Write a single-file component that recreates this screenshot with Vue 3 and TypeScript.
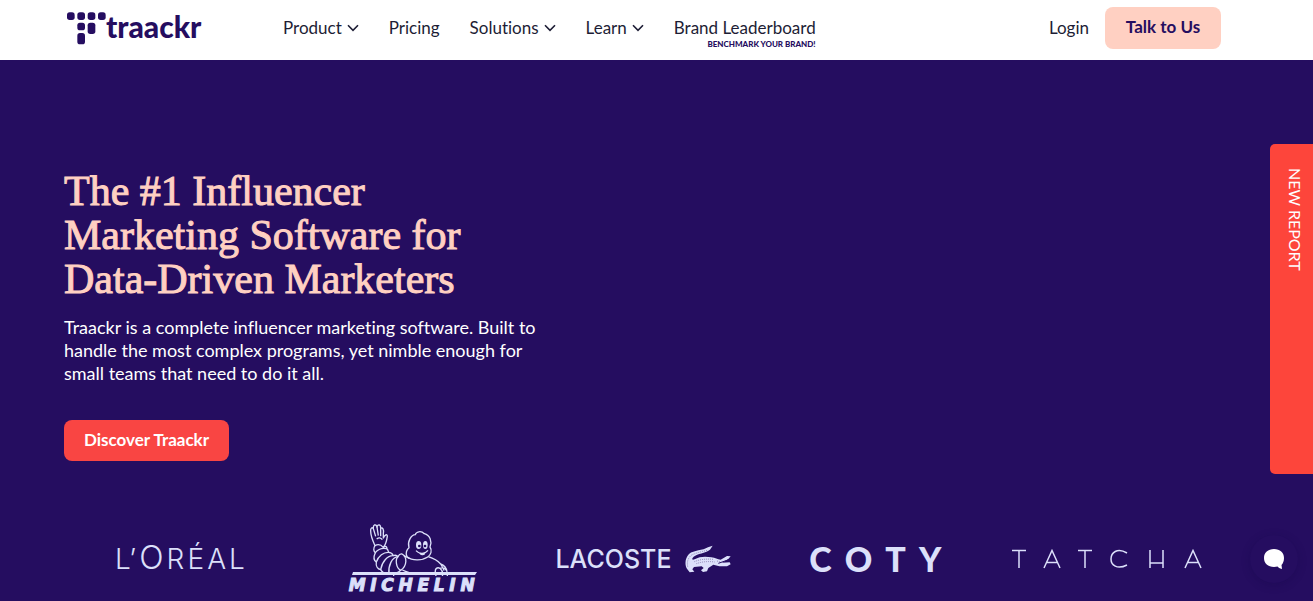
<script setup lang="ts">
interface NavItem {
  label: string
  menu?: boolean
  note?: string
}

const navItems: NavItem[] = [
  { label: 'Product', menu: true },
  { label: 'Pricing' },
  { label: 'Solutions', menu: true },
  { label: 'Learn', menu: true },
  { label: 'Brand Leaderboard', note: 'Benchmark your brand!' },
]
</script>

<template>
  <div class="page">
    <header class="header">
      <a class="brand" href="#" aria-label="traackr home">
        <svg class="brand-mark" viewBox="0 0 117 97" aria-hidden="true">
          <rect x="0" y="0" width="23" height="23" rx="8" />
          <rect x="31" y="0" width="23" height="23" rx="8" />
          <rect x="62" y="0" width="23" height="23" rx="8" />
          <rect x="93" y="0" width="23" height="23" rx="8" />
          <rect x="31" y="31" width="23" height="23" rx="8" />
          <rect x="62" y="31" width="23" height="34" rx="8" />
          <rect x="31" y="62" width="23" height="34" rx="8" />
        </svg>
        <span class="brand-name">traackr</span>
      </a>
      <nav class="nav" aria-label="Main">
        <template v-for="item in navItems" :key="item.label">
          <button v-if="item.menu" type="button" class="nav-item">
            {{ item.label }}
            <svg class="chevron" viewBox="0 0 12 8" aria-hidden="true">
              <path d="M1 1.2 L6 6.4 L11 1.2" />
            </svg>
          </button>
          <a v-else href="#" class="nav-item">
            {{ item.label }}
            <span v-if="item.note" class="nav-note">{{ item.note }}</span>
          </a>
        </template>
      </nav>
      <div class="account">
        <a href="#" class="nav-item">Login</a>
        <a href="#" class="talk">Talk to Us</a>
      </div>
    </header>

    <main class="hero">
      <section class="intro">
        <h1>The #1 Influencer<br />Marketing Software for<br />Data-Driven Marketers</h1>
        <p>
          Traackr is a complete influencer marketing software. Built to<br />
          handle the most complex programs, yet nimble enough for<br />
          small teams that need to do it all.
        </p>
        <a href="#" class="discover">Discover Traackr</a>
      </section>

      <ul class="clients">
        <li class="wordmark loreal" aria-label="L’ORÉAL">
          <span>L’</span><span class="loreal-o">O</span><span>R</span><span>É</span><span>A</span><span>L</span>
        </li>
        <li class="michelin">
          <svg class="michelin-man" viewBox="0 0 390 162" aria-hidden="true">
            <g class="outline">
              <path d="M84 71 C77 56 71 40 71 27 C70 18 76 14 79 20 C78 8 86 4 90 15 C93 5 101 7 101 19 C107 15 111 22 109 34 L109 48 C113 39 121 34 121 43 C119 57 116 68 109 76" />
              <path d="M79 20 L86 43 M90 15 L94 41 M101 19 L101 43 M89 51 Q99 43 106 53" />
              <path d="M84 71 C78 79 80 88 85 92 C93 82 105 77 119 80 C121 75 116 70 109 76 C101 67 91 67 84 71" />
              <path d="M85 92 C78 107 82 116 88 120 C94 102 110 90 125 91 C123 84 121 81 119 80" />
              <path d="M88 120 C86 132 92 141 101 143 C105 119 122 100 139 101 C136 94 131 91 125 91" />
              <path d="M101 143 C105 151 116 156 126 155 C123 132 135 105 153 104 C149 99 144 99 139 101" />
              <path d="M126 155 C140 158 153 153 161 145 C147 138 144 112 153 104 M161 145 C181 132 181 104 165 96 C159 95 156 98 153 104" />
              <path d="M180 104 C174 94 180 82 186 77 C180 59 193 38 205 38 C207 29 222 25 232 35 C249 39 256 59 249 75 C257 86 251 99 242 105 C224 117 195 116 180 104Z" />
              <path d="M171 101 L187 109 M166 144 C191 157 235 158 266 151 M140 157 L140 163" />
              <path d="M244 104 C260 109 274 118 281 126 C285 133 289 139 291 146 M279 139 C289 135 297 140 301 151 L301 163 M267 163 L265 149 C264 141 270 134 279 139 C286 145 288 154 286 163 M281 126 C292 130 298 138 300 149" />
              <path d="M207 86 C218 98 233 97 243 85 M218 93 Q228 104 235 91" />
            </g>
            <ellipse cx="215" cy="69" rx="8" ry="12" />
            <ellipse cx="235" cy="69" rx="7" ry="12" />
            <circle class="pupil" cx="217" cy="72" r="4" />
            <circle class="pupil" cx="234" cy="72" r="4" />
          </svg>
          <svg class="michelin-bar" viewBox="0 0 130 4" aria-hidden="true">
            <path d="M6 0 H130 L128 3 H5Z" />
          </svg>
          <span class="wordmark michelin-name" aria-label="MICHELIN">
            <b v-for="(letter, index) in 'MICHELIN'" :key="index">{{ letter }}</b>
          </span>
        </li>
        <li class="lacoste">
          LACOSTE
          <svg class="crocodile" viewBox="0 0 138 84" aria-hidden="true">
            <path d="M7 73 C-2 61 0 39 12 27 C27 15 53 17 69 7 L83 2 L75 14 C60 25 38 25 26 35 C19 42 21 47 29 43 C44 34 62 34 79 37 C91 39 97 43 107 44 L126 33 L137 34 L130 42 L111 53 L134 52 L137 58 L126 64 L103 64 L85 59 L70 69 L66 79 L54 81 L48 76 L56 69 L50 64 L27 66 L22 73 L28 80 L14 82Z" />
            <path class="scale" d="M8 65 Q4 42 20 30 Q37 22 67 16 M28 50 Q53 40 84 43 M34 56 Q59 47 89 51 M96 48 L104 50" />
            <path class="mouth" d="M100 55 L134 43" />
          </svg>
        </li>
        <li class="wordmark coty" aria-label="COTY"><b>C</b><b>O</b><b>T</b><b>Y</b></li>
        <li class="tatcha">
          <svg viewBox="0 0 190 20" role="img" aria-label="TATCHA">
            <path d="M0 1.5 H14 M7 1.5 V19 M32 19 L40 1.5 L48 19 M35 13.5 H45 M66 1.5 H80 M73 1.5 V19 M115 4 C105 -2 99 4 99 10 C99 16 105 21 115 16 M138 1 V19 M151 1 V19 M138 14 H151 M173 19 L181 1.5 L189 19 M176 13.5 H186" />
          </svg>
        </li>
      </ul>
    </main>

    <a href="#" class="report">NEW REPORT</a>
    <button type="button" class="chat" aria-label="Open chat">
      <svg viewBox="0 0 20 20" aria-hidden="true">
        <path d="M10 0 C16 0 20 3.5 20 9 C20 12 19 14.4 17.5 16 L18 20 C15.5 19.6 14.5 18.5 13.5 17.6 C12.5 18 11.3 18 10 18 C4 18 0 14.5 0 9 C0 3.5 4 0 10 0Z" />
      </svg>
    </button>
  </div>
</template>

<style>
body {
  margin: 0;
}
</style>

<style scoped>
.page {
  display: flex;
  flex-direction: column;
  min-height: 100vh;
  background: #250d60;
  color: #fff;
  font-family: Lato, "Liberation Sans", sans-serif;
  font-variant-ligatures: no-common-ligatures;
}

a {
  color: inherit;
  text-decoration: none;
}

.header {
  box-sizing: border-box;
  display: flex;
  align-items: center;
  height: 60px;
  padding: 0 92px 4px 67px;
  background: #fff;
  color: #1d1d35;
}

.brand {
  display: flex;
  width: 216px;
  color: #250d60;
}

.brand-mark {
  width: 39px;
  height: 33px;
  fill: #250d60;
}

.brand-name {
  font-size: 30px;
  font-weight: 900;
  line-height: 29px;
}

.nav {
  display: flex;
  gap: 30px;
}

.nav-item {
  position: relative;
  display: flex;
  align-items: center;
  gap: 5px;
  padding: 0;
  border: 0;
  background: none;
  color: inherit;
  font: inherit;
  font-size: 17px;
  line-height: 24px;
  cursor: pointer;
}

.chevron {
  width: 12px;
  height: 8px;
  fill: none;
  stroke: currentColor;
  stroke-width: 1.6;
}

.nav-note {
  position: absolute;
  top: 22px;
  right: 0;
  color: #250d60;
  font-size: 8px;
  font-weight: 900;
  line-height: 12px;
  text-transform: uppercase;
  white-space: nowrap;
}

.account {
  display: flex;
  align-items: center;
  gap: 16px;
  margin-left: auto;
}

.talk,
.discover {
  box-sizing: border-box;
  border-radius: 8px;
  font-size: 17px;
  font-weight: 700;
  text-align: center;
}

.talk {
  width: 116px;
  height: 42px;
  background: #ffd0c2;
  color: #250d60;
  line-height: 40px;
}

.hero {
  display: flex;
  flex: 1;
  flex-direction: column;
  justify-content: space-between;
  padding: 109px 90px 6px 64px;
}

.intro {
  display: flex;
  flex-direction: column;
  align-items: flex-start;
}

h1 {
  margin: 0;
  color: #ffd0c2;
  font-family: "Liberation Serif", serif;
  font-size: 42px;
  font-weight: 400;
  line-height: 44px;
  -webkit-text-stroke: 1px #ffd0c2;
}

p {
  margin: 15px 0 35px;
  font-size: 18px;
  line-height: 23px;
}

.discover {
  width: 165px;
  height: 41px;
  background: #f94543;
  line-height: 39px;
}

.clients {
  display: grid;
  grid-template-columns: repeat(5, 1fr);
  align-items: center;
  justify-items: center;
  margin: 0;
  padding: 0;
  color: #dce0fa;
  list-style: none;
}

.wordmark {
  display: flex;
  align-items: baseline;
  justify-content: space-between;
}

.loreal {
  width: 130px;
  font-family: Inter, sans-serif;
  font-size: 28px;
  font-weight: 300;
  line-height: 32px;
}

.loreal-o {
  font-size: 32px;
}

.michelin {
  display: flex;
  flex-direction: column;
  align-items: center;
}

.michelin-man {
  width: 130px;
  height: 54px;
  margin-bottom: -4px;
  fill: #dce0fa;
}

.outline {
  fill: none;
  stroke: #dce0fa;
  stroke-width: 4;
  stroke-linejoin: round;
}

.pupil {
  fill: #250d60;
}

.michelin-bar {
  width: 130px;
  height: 4px;
  fill: #dce0fa;
}

.michelin-name {
  width: 126px;
  font-family: "DejaVu Sans", sans-serif;
  font-size: 17px;
  font-style: italic;
  line-height: 19px;
  -webkit-text-stroke: 1px #dce0fa;
}

.lacoste {
  display: flex;
  align-items: center;
  gap: 14px;
  font-family: Inter, sans-serif;
  font-size: 25px;
  font-weight: 500;
  line-height: 32px;
}

.crocodile {
  width: 46px;
  height: 28px;
  fill: #dce0fa;
}

.scale {
  fill: none;
  stroke: #695a96;
  stroke-width: 2;
  stroke-dasharray: 3 3;
}

.mouth {
  stroke: #250d60;
  stroke-width: 3;
}

.coty {
  width: 132px;
  font-size: 34px;
  line-height: 36px;
}

.coty b {
  font-weight: 900;
}

.tatcha svg {
  display: block;
  width: 190px;
  height: 20px;
  fill: none;
  stroke: #dce0fa;
  stroke-width: 1.5;
}

.report {
  position: fixed;
  top: 144px;
  right: 0;
  box-sizing: border-box;
  width: 43px;
  height: 330px;
  padding: 24px 0;
  border-radius: 5px 0 0 5px;
  background: #fd453b;
  font-size: 16px;
  line-height: 36px;
  writing-mode: vertical-rl;
}

.chat {
  position: fixed;
  right: 15px;
  bottom: 18px;
  display: flex;
  align-items: center;
  justify-content: center;
  width: 48px;
  height: 48px;
  padding: 0;
  border: 0;
  border-radius: 50%;
  background: #250d60;
  box-shadow: 0 2px 8px rgb(20 5 70 / 30%);
}

.chat svg {
  width: 20px;
  height: 20px;
  fill: #fff;
}
</style>
